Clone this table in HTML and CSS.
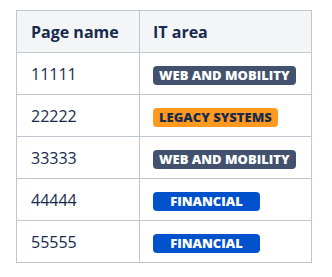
FILE: index.html
```html
<!DOCTYPE html>
<html lang="en">
<head>
<meta charset="UTF-8" />
<title>IT areas</title>
<link rel="stylesheet" href="styles.css">
</head>
<body>

<table class="pages">
  <thead>
    <tr>
      <th class="col-name">Page name</th>
      <th class="col-area">IT area</th>
    </tr>
  </thead>
  <tbody>
    <tr>
      <td>11111</td>
      <td class="col-area"><span class="lozenge web">WEB AND MOBILITY</span></td>
    </tr>
    <tr>
      <td>22222</td>
      <td class="col-area"><span class="lozenge legacy">LEGACY SYSTEMS</span></td>
    </tr>
    <tr>
      <td>33333</td>
      <td class="col-area"><span class="lozenge web">WEB AND MOBILITY</span></td>
    </tr>
    <tr>
      <td>44444</td>
      <td class="col-area"><span class="lozenge financial">FINANCIAL</span></td>
    </tr>
    <tr>
      <td>55555</td>
      <td class="col-area"><span class="lozenge financial">FINANCIAL</span></td>
    </tr>
  </tbody>
</table>

</body>
</html>
```

FILE: styles.css
```css
html, body {
  margin: 0;
  padding: 0;
  background: #fff;
  font-family: "Open Sans", "Noto Sans", sans-serif;
  color: #172b4d;
}

body {
  padding: 10px 0 0 16px;
}

.pages {
  border-collapse: collapse;
  width: 296px;
  font-size: 16px;
}

.pages th, .pages td {
  border: 1px solid #c1c7d0;
  height: 41px;
  padding: 0 13px 0 14px;
  text-align: left;
  vertical-align: middle;
}

.pages th {
  background-color: #f4f5f7;
  font-weight: 700;
}

.col-name { width: 95px; }
.pages .col-area { padding-left: 13px; }

.lozenge {
  display: inline-block;
  box-sizing: border-box;
  height: 19px;
  line-height: 19px;
  padding: 0 6px;
  border-radius: 4px;
  font-size: 13px;
  font-weight: 800;
  text-align: center;
  color: #fff;
}

.lozenge.web { background-color: #42526e; }
.lozenge.legacy { background-color: #ff991f; color: #172b4d; }
.lozenge.financial { background-color: #0052cc; min-width: 107px; }
```
